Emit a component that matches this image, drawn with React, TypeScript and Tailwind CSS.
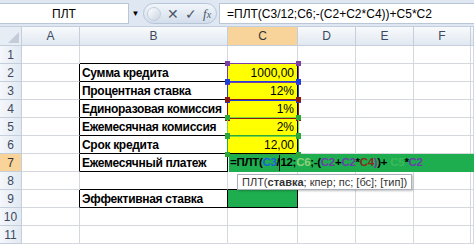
import React from 'react';

const COLS = [
  { key: 'A', w: 'w-[58px]' },
  { key: 'B', w: 'w-[148px]' },
  { key: 'C', w: 'w-[70px]' },
  { key: 'D', w: 'w-[58px]' },
  { key: 'E', w: 'w-[58px]' },
  { key: 'F', w: 'w-[57px]' },
  { key: 'G', w: 'flex-1' },
];

const LABELS: Record<number, string> = {
  2: 'Сумма кредита',
  3: 'Процентная ставка',
  4: 'Единоразовая комиссия',
  5: 'Ежемесячная комиссия',
  6: 'Срок кредита',
  7: 'Ежемесячный платеж',
  9: 'Эффективная ставка',
};

const VALUES: Record<number, string> = {
  2: '1000,00',
  3: '12%',
  4: '1%',
  5: '2%',
  6: '12,00',
};

const boxed = (r: number, c: number) =>
  ((r >= 2 && r <= 7) || r === 9) && (c === 1 || c === 2);

function borders(r: number, c: number) {
  const right = boxed(r, c) || boxed(r, c + 1);
  const bottom = boxed(r, c) || boxed(r + 1, c);
  return [
    right ? 'border-r-black' : 'border-r-[#d4d7dc]',
    bottom ? 'border-b-black' : 'border-b-[#d4d7dc]',
  ].join(' ');
}

function RowHeader({ n, active }: { n: number; active?: boolean }) {
  return (
    <div
      className={`w-[22px] h-[18px] shrink-0 flex items-center justify-center border-r border-b border-[#c5cfdc] text-[12px] ${
        active ? 'bg-[#f8d49a] text-[#333]' : 'bg-gradient-to-r from-[#f4f7fb] to-[#e2e9f2] text-[#3b4a5e]'
      }`}
    >
      {n}
    </div>
  );
}

function Range({ top, color, dark }: { top: string; color: string; dark: string }) {
  return (
    <div className={`absolute left-[227px] w-[72px] h-[20px] border ${top} ${color} pointer-events-none`}>
      <span className={`absolute -left-[3px] -top-[3px] w-[5px] h-[5px] ${dark}`} />
      <span className={`absolute -right-[3px] -top-[3px] w-[5px] h-[5px] ${dark}`} />
      <span className={`absolute -left-[3px] -bottom-[3px] w-[5px] h-[5px] ${dark}`} />
      <span className={`absolute -right-[3px] -bottom-[3px] w-[5px] h-[5px] ${dark}`} />
    </div>
  );
}

export default function App() {
  const rows = [1, 2, 3, 4, 5, 6, 7, 8, 9, 10, 11];

  return (
    <div className="relative w-[474px] h-[248px] overflow-hidden bg-white font-['Liberation_Sans',Arial,sans-serif] text-black">
      {/* formula bar */}
      <div className="h-[27px] flex items-center bg-[#dfe7f2] border-b border-[#c3cfdf] pt-[1px]">
        <div className="w-[129px] h-[21px] bg-white border border-[#b9c6d8] border-l-0 flex items-center justify-center text-[12px]">
          ПЛТ
        </div>
        <div className="w-[13px] flex justify-center text-[8px] text-black">▼</div>
        <div className="ml-[1px] w-[74px] h-[21px] rounded-full bg-gradient-to-b from-[#f2f6fb] to-[#d3deeb] border border-[#b7c5d8] flex items-center px-[3px] gap-[6px]">
          <span className="w-[14px] h-[14px] rounded-full bg-gradient-to-br from-white to-[#c9d4e2] border border-[#c3cedd]" />
          <span className="text-[14px] text-[#4d5866] leading-none">✕</span>
          <span className="text-[14px] text-[#4d5866] leading-none">✓</span>
          <span className="text-[13px] italic text-[#4d5866] font-['Liberation_Serif',serif] leading-none">
            f<span className="text-[10px]">x</span>
          </span>
        </div>
        <div className="ml-[2px] flex-1 h-[21px] bg-white border border-[#b9c6d8] border-r-0 flex items-center pl-[7px] text-[12px] whitespace-nowrap">
          =ПЛТ(C3/12;C6;-(C2+C2*C4))+C5*C2
        </div>
      </div>

      {/* column headers */}
      <div className="flex h-[19px]">
        <div className="w-[22px] shrink-0 border-r border-b border-[#c5cfdc] bg-[#e7edf5] relative">
          <span className="absolute right-[2px] bottom-[2px] w-0 h-0 border-l-[11px] border-l-transparent border-b-[11px] border-b-[#c3ccd8]" />
        </div>
        {COLS.map((c) => (
          <div
            key={c.key}
            className={`${c.w} shrink-0 border-r border-b border-[#c5cfdc] flex items-center justify-center text-[12px] ${
              c.key === 'C'
                ? 'bg-[#f8d49a] text-[#333]'
                : 'bg-gradient-to-b from-[#f8fafc] to-[#e1e8f1] text-[#3b4a5e]'
            }`}
          >
            {c.key === 'G' ? '' : c.key}
          </div>
        ))}
      </div>

      {/* rows */}
      {rows.map((r) => {
        if (r === 7) {
          return (
            <div key={r} className="flex h-[18px]">
              <RowHeader n={r} active />
              <div className={`w-[58px] shrink-0 border-r border-b ${borders(r, 0)}`} />
              <div className={`w-[148px] shrink-0 border-r border-b ${borders(r, 1)} pl-[2px] flex items-center text-[12px] tracking-[-0.3px] font-bold whitespace-nowrap`}>
                {LABELS[r]}
              </div>
              <div className="flex-1 bg-[#1fae4f] border-l border-l-[#e6f3ea] flex items-center pl-[1px] text-[11.5px] tracking-[-0.3px] font-bold whitespace-nowrap">
                <span>=ПЛТ(</span>
                <span className="text-[#1f5fd6]">C3</span>
                <span>/</span>
                <span className="w-[1px] h-[16px] bg-black" />
                <span>12;</span>
                <span className="text-[#8fd07a]">C6</span>
                <span>;-(</span>
                <span className="text-[#6a3fa8]">C2</span>
                <span>+</span>
                <span className="text-[#6a3fa8]">C2</span>
                <span>*</span>
                <span className="text-[#8a2a1c]">C4</span>
                <span className="text-[#6a3fa8]">)</span>
                <span>)+</span>
                <span className="text-[#3cba5c] ml-[3px]">C5</span>
                <span>*</span>
                <span className="text-[#6a3fa8]">C2</span>
              </div>
            </div>
          );
        }
        return (
          <div key={r} className="flex h-[18px]">
            <RowHeader n={r} />
            {COLS.map((c, ci) => {
              const isC = ci === 2;
              const fill =
                isC && r >= 2 && r <= 6 ? 'bg-[#ffff00]' : isC && r === 9 ? 'bg-[#1fae4f]' : 'bg-white';
              return (
                <div
                  key={c.key}
                  className={`${c.w} shrink-0 border-r border-b ${borders(r, ci)} ${fill} flex items-center text-[12px] whitespace-nowrap overflow-hidden ${
                    isC ? 'justify-end pr-[3px]' : 'pl-[2px]'
                  } ${ci === 1 ? 'font-bold tracking-[-0.3px]' : ''}`}
                >
                  {ci === 1 ? LABELS[r] : isC ? VALUES[r] : ''}
                </div>
              );
            })}
          </div>
        );
      })}

      {/* range highlights */}
      <Range top="top-[63px]" color="border-[#7b3fa6]" dark="bg-[#7b3fa6]" />
      <Range top="top-[81px]" color="border-[#1d3fe0]" dark="bg-[#1d3fe0]" />
      <Range top="top-[99px]" color="border-[#8b1a12]" dark="bg-[#8b1a12]" />
      <Range top="top-[117px]" color="border-[#7fd63a]" dark="bg-[#2fa83a]" />
      <Range top="top-[135px]" color="border-[#2fa83a]" dark="bg-[#2fa83a]" />

      {/* function tooltip */}
      <div className="absolute left-[237px] top-[174px] h-[16px] px-[4px] bg-white border border-[#a9b0ba] shadow-[1px_1px_2px_rgba(0,0,0,0.25)] flex items-center text-[11px] text-[#333] whitespace-nowrap">
        ПЛТ(<span className="font-bold">ставка</span>; кпер; пс; [бс]; [тип])
      </div>
    </div>
  );
}
